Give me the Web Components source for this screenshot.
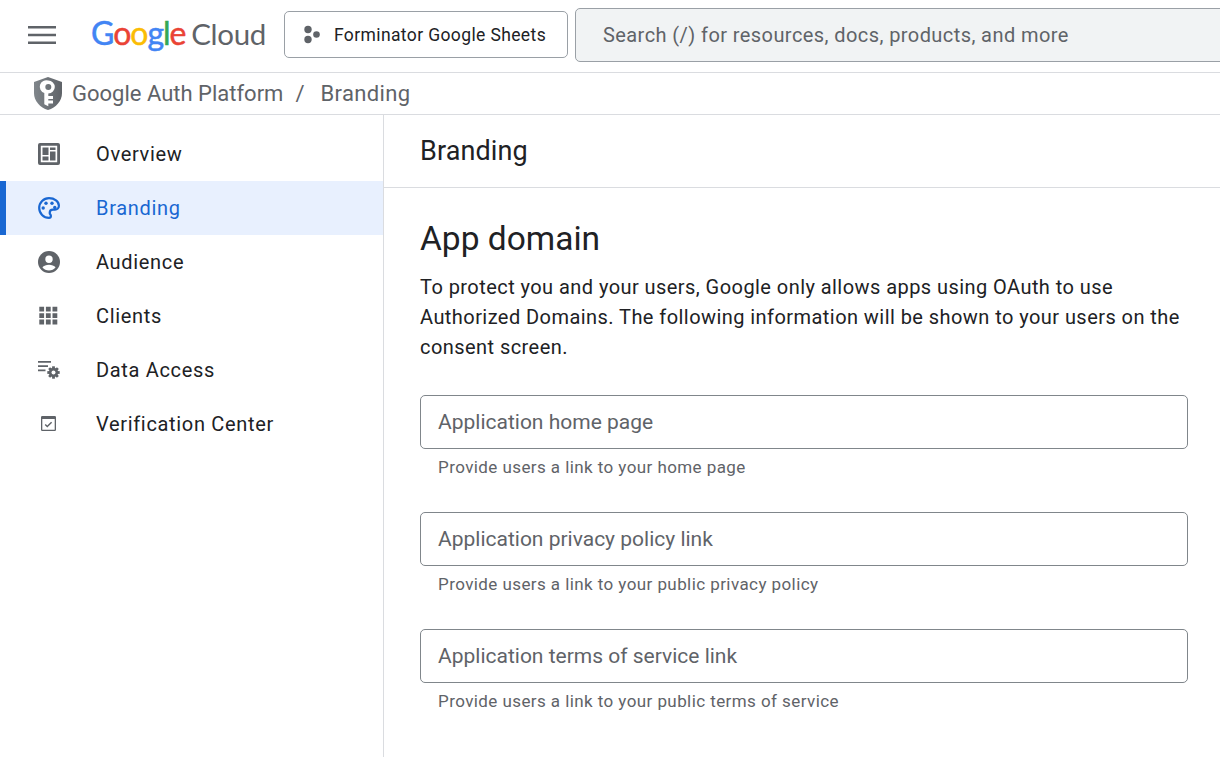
<!DOCTYPE html>
<html>
<head>
<meta charset="utf-8">
<title>Branding</title>
<style>
  html, body { margin: 0; height: 100%; overflow: hidden; background: #fff; }
  body { font-family: Roboto, "Liberation Sans", sans-serif; color: #202124; }
</style>
</head>
<body>
<app-shell>
  <top-bar slot="top"></top-bar>
  <bread-crumbs slot="top"></bread-crumbs>
  <side-nav slot="side">
    <nav-item icon="overview">Overview</nav-item>
    <nav-item icon="branding" active>Branding</nav-item>
    <nav-item icon="audience">Audience</nav-item>
    <nav-item icon="clients">Clients</nav-item>
    <nav-item icon="data">Data Access</nav-item>
    <nav-item icon="verify">Verification Center</nav-item>
  </side-nav>
  <branding-page>
    <url-field label="Application home page" hint="Provide users a link to your home page"></url-field>
    <url-field label="Application privacy policy link" hint="Provide users a link to your public privacy policy"></url-field>
    <url-field label="Application terms of service link" hint="Provide users a link to your public terms of service"></url-field>
  </branding-page>
</app-shell>

<script>
class AppShell extends HTMLElement {
  constructor() {
    super();
    this.attachShadow({ mode: 'open' });
    this.shadowRoot.innerHTML = `
      <style>
        :host { display: flex; flex-direction: column; height: 757px; width: 1220px; overflow: hidden; }
        #body { flex: 1; display: flex; min-height: 0; }
        #side { width: 383px; flex: none; border-right: 1px solid #dadce0; }
        #main { flex: 1; min-width: 0; }
      </style>
      <slot name="top"></slot>
      <div id="body">
        <div id="side"><slot name="side"></slot></div>
        <div id="main"><slot></slot></div>
      </div>
    `;
  }
}

class TopBar extends HTMLElement {
  constructor() {
    super();
    this.attachShadow({ mode: 'open' });
    this.shadowRoot.innerHTML = `
      <style>
        :host { display: flex; align-items: center; height: 70px; padding-bottom: 2px; border-bottom: 1px solid #dadce0; overflow: hidden; }
        #menu { width: 28px; height: 18px; margin-left: 28px; flex: none; }
        #logo { margin-left: 35px; margin-top: -5px; flex: none; display: flex; align-items: baseline; font: 400 32px Lato, Roboto, sans-serif; letter-spacing: -1.1px; width: 177px; white-space: nowrap; }
        #logo b { font-weight: 400; -webkit-text-stroke: .5px currentColor; }
        #cloud { color: #5f6368; margin-left: 6px; font-size: 29.5px; letter-spacing: -.3px; }
        #project { margin: -1px 0 0 16px; flex: none; width: 284px; height: 47px; box-sizing: border-box; border: 1px solid #9aa0a6; border-radius: 5px; display: flex; align-items: center; padding-left: 18px; font-size: 17.5px; letter-spacing: .38px; white-space: nowrap; }
        #project svg { width: 18px; height: 20px; margin-right: 13px; flex: none; }
        #search { margin-left: 7px; flex: none; width: 700px; height: 54px; box-sizing: border-box; border: 1px solid #9aa0a6; border-radius: 5px; background: #f1f3f4; display: flex; align-items: center; padding-left: 27px; font-size: 20px; letter-spacing: .42px; color: #5f6368; white-space: nowrap; }
      </style>
      <svg id="menu" viewBox="0 0 28 18"><path fill="#5f6368" d="M0 0h28v2.500H0zM0 7.750h28v2.500H0zM0 15.500h28V18H0z"/></svg>
      <div id="logo"><b style="color:#4285f4">G</b><b style="color:#ea4335">o</b><b style="color:#fbbc05">o</b><b style="color:#4285f4">g</b><b style="color:#34a853">l</b><b style="color:#ea4335">e</b><span id="cloud">Cloud</span></div>
      <div id="project">
        <svg viewBox="0 0 18 20"><g fill="#5f6368"><circle cx="5" cy="4.500" r="3.700"/><circle cx="5" cy="14.500" r="3.700"/><circle cx="13.500" cy="9.500" r="3.300"/></g></svg>
        Forminator Google Sheets
      </div>
      <div id="search">Search (/) for resources, docs, products, and more</div>
    `;
  }
}

class BreadCrumbs extends HTMLElement {
  constructor() {
    super();
    this.attachShadow({ mode: 'open' });
    this.shadowRoot.innerHTML = `
      <style>
        :host { display: flex; align-items: center; height: 41px; border-bottom: 1px solid #dadce0; padding-left: 34px; font-size: 22px; color: #5f6368; white-space: nowrap; }
        svg { width: 28px; height: 33px; margin-right: 10px; flex: none; }
        #sep { margin: 0 16px 0 12px; }
        #cur { letter-spacing: .35px; }
      </style>
      <svg viewBox="0 0 28 33">
        <defs><linearGradient id="s" x1="0" x2="1"><stop offset="0" stop-color="#80868b"/><stop offset="1" stop-color="#5f6368"/></linearGradient></defs>
        <path fill="url(#s)" d="M14 0 28 5v11c0 8-6 14.500-14 17C6 30.500 0 24 0 16V5z"/>
        <path fill="#fff" fill-rule="evenodd" d="M13.300 3.500a6.500 6.500 0 1 1 0 13V19h4.700v3h-4.700v1.500H18v3h-4.700v2.800l-1-.5-3-1.500V16a6.500 6.500 0 0 1 4-12.500zm0 3.500a3 3 0 1 0 0 6 3 3 0 0 0 0-6z" transform="translate(1 0)"/>
      </svg>
      <span>Google Auth Platform</span><span id="sep">/</span><span id="cur">Branding</span>
    `;
  }
}

class SideNav extends HTMLElement {
  constructor() {
    super();
    this.attachShadow({ mode: 'open' });
    this.shadowRoot.innerHTML = `
      <style>:host { display: block; padding-top: 12px; }</style>
      <slot></slot>
    `;
  }
}

function gear(cx, cy) {
  let teeth = '';
  for (let a = 0; a < 180; a += 45) {
    teeth += `<rect x="-1.400" y="-6.200" width="2.800" height="12.400" transform="rotate(${a})"/>`;
  }
  return `<g transform="translate(${cx} ${cy})">${teeth}<circle r="4.700"/><circle r="2" fill="#fff"/></g>`;
}

const NAV_ICONS = {
  overview: '<path fill-rule="evenodd" d="M2 0h18a2 2 0 0 1 2 2v18a2 2 0 0 1-2 2H2a2 2 0 0 1-2-2V2a2 2 0 0 1 2-2zm.800 2.800v16.400h16.400V2.800z"/><path d="M4.500 4.500h6V12h-6zM4.500 13.500h6v4h-6zM12 4.500h5.500V7H12zM12 8.500h5.500v9H12z"/>',
  branding: '<path fill="none" stroke="currentColor" stroke-width="2.200" d="M11 1.200C5.600 1.200 1.200 5.600 1.200 11s4.400 9.800 9.800 9.800c1.100 0 1.900-.8 1.900-1.900 0-.5-.2-1-.5-1.300-.4-.5-.7-1-.7-1.700 0-1.800 1.400-3.200 3.200-3.200H17c2.300 0 3.900-1.700 3.900-3.900C20.900 4.500 16.500 1.200 11 1.200z"/><circle cx="5.200" cy="11" r="1.700"/><circle cx="8" cy="6.300" r="1.700"/><circle cx="14" cy="6.300" r="1.700"/><circle cx="16.800" cy="10.500" r="1.700"/>',
  audience: '<path fill-rule="evenodd" d="M11 0a11 11 0 1 1 0 22 11 11 0 0 1 0-22zm0 4.500a3.700 3.700 0 1 0 0 7.400 3.700 3.700 0 0 0 0-7.400zm0 9.300c-2.700 0-5.300 1-6.600 2.500a8.400 8.400 0 0 0 13.200 0c-1.300-1.500-3.900-2.500-6.600-2.500z"/>',
  clients: '<path d="M1.300 1.800h4.800v4.800H1.300zM7.900 1.800h4.800v4.800H7.900zM14.500 1.800h4.800v4.800h-4.800zM1.300 8.200h4.800V13H1.300zM7.900 8.200h4.800V13H7.900zM14.500 8.200h4.800V13h-4.800zM1.300 14.600h4.800v4.800H1.300zM7.900 14.600h4.800v4.800H7.900zM14.500 14.600h4.800v4.800h-4.800z"/>',
  data: '<path d="M0 2h13v1.800H0zM0 6.200h10V8H0zM0 10.400h7.500v1.800H0z"/>' + gear(15.5, 13.5),
  verify: '<path fill-rule="evenodd" d="M4.200 3h12.600A1.200 1.200 0 0 1 18 4.200v12.600a1.200 1.200 0 0 1-1.200 1.200H4.200A1.200 1.200 0 0 1 3 16.800V4.200A1.200 1.200 0 0 1 4.200 3zm.1 3v10.700h12.400V6z"/><path d="M9.300 14.500 6.700 11.900l1-1 1.600 1.600 3.800-3.800 1 1z"/>'
};

class NavItem extends HTMLElement {
  constructor() {
    super();
    this.attachShadow({ mode: 'open' });
    const name = this.getAttribute('icon');
    this.shadowRoot.innerHTML = `
      <style>
        :host { display: flex; align-items: center; height: 54px; box-sizing: border-box; padding-left: 38px; font-size: 20px; letter-spacing: .67px; color: #202124; white-space: nowrap; }
        :host([active]) { background: #e8f0fe; color: #1967d2; border-left: 6px solid #1967d2; padding-left: 32px; }
        svg { width: 22px; height: 22px; margin-right: 36px; flex: none; fill: #5f6368; color: #5f6368; }
        :host([active]) svg { fill: #1967d2; color: #1967d2; }
      </style>
      <svg viewBox="0 0 22 22">${NAV_ICONS[name] || ''}</svg>
      <slot></slot>
    `;
  }
}

class BrandingPage extends HTMLElement {
  constructor() {
    super();
    this.attachShadow({ mode: 'open' });
    this.shadowRoot.innerHTML = `
      <style>
        :host { display: block; }
        header { height: 72px; display: flex; align-items: center; padding-left: 36px; border-bottom: 1px solid #dadce0; font-size: 27px; letter-spacing: .1px; }
        section { padding: 30px 32px 0 36px; }
        h2 { margin: 0 0 12px; font-weight: 400; font-size: 33.5px; line-height: 42px; }
        p { margin: 0 0 33px; font-size: 20px; line-height: 30px; letter-spacing: .44px; }
      </style>
      <header>Branding</header>
      <section>
        <h2>App domain</h2>
        <p>To protect you and your users, Google only allows apps using OAuth to use Authorized Domains. The following information will be shown to your users on the consent screen.</p>
        <slot></slot>
      </section>
    `;
  }
}

class UrlField extends HTMLElement {
  constructor() {
    super();
    this.attachShadow({ mode: 'open' });
    this.shadowRoot.innerHTML = `
      <style>
        :host { display: block; height: 117px; }
        #box { height: 54px; box-sizing: border-box; border: 1px solid #80868b; border-radius: 5px; display: flex; align-items: center; padding-left: 17px; font-size: 21px; letter-spacing: 0; color: #5f6368; }
        #hint { margin: 8px 0 0 18px; font-size: 17px; line-height: 20px; letter-spacing: .42px; color: #5f6368; }
      </style>
      <div id="box">${this.getAttribute('label')}</div>
      <div id="hint">${this.getAttribute('hint')}</div>
    `;
  }
}

customElements.define('app-shell', AppShell);
customElements.define('top-bar', TopBar);
customElements.define('bread-crumbs', BreadCrumbs);
customElements.define('side-nav', SideNav);
customElements.define('nav-item', NavItem);
customElements.define('branding-page', BrandingPage);
customElements.define('url-field', UrlField);
</script>
</body>
</html>
